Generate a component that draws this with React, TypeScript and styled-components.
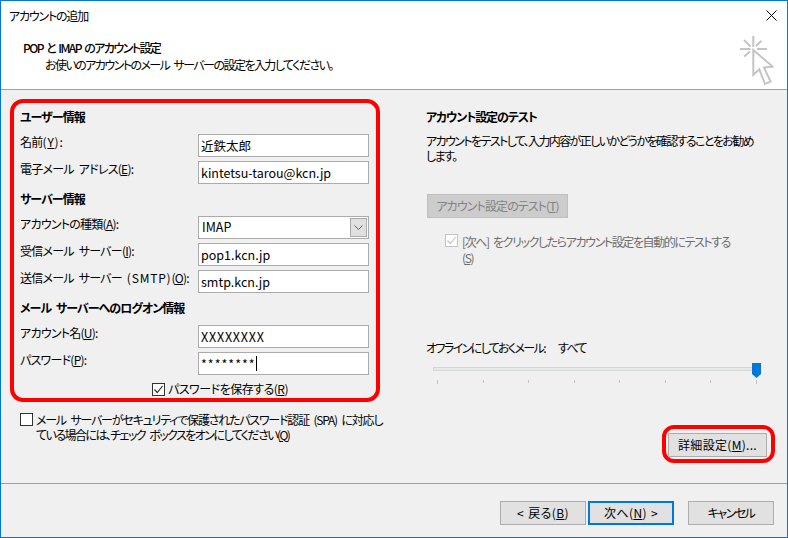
import React from 'react';
import styled, { createGlobalStyle } from 'styled-components';

const GlobalStyle = createGlobalStyle`
  html, body {
    margin: 0;
    padding: 0;
    background: #f0f0f0;
  }

  body {
    font-family: "Noto Sans CJK JP", "Noto Sans", sans-serif;
    font-size: 12px;
    font-feature-settings: "palt";
    color: #000;
  }

  * {
    box-sizing: border-box;
  }
`;

const Window = styled.div`
  width: 788px;
  height: 538px;
  border: 1px solid #0078d7;
  background: #f0f0f0;
  display: flex;
  flex-direction: column;
  overflow: hidden;
`;

const TitleBar = styled.div`
  height: 30px;
  background: #fff;
  display: flex;
  justify-content: space-between;
  align-items: center;
  padding: 0 10px 0 8px;
  line-height: 16px;
  letter-spacing: -1.2px;

  svg {
    margin-top: -2px;
  }
`;

const Header = styled.div`
  height: 59px;
  background: #fff;
  border-bottom: 1px solid #a0a0a0;
  display: flex;
  justify-content: space-between;
  padding: 8px 13px 0 22px;

  svg {
    margin-top: -3px;
  }
`;

const HeaderTitle = styled.div`
  font-weight: 500;
  line-height: 18px;
  letter-spacing: -1.55px;
  word-spacing: 2px;
`;

const HeaderText = styled.div`
  line-height: 16px;
  padding-left: 22px;
  letter-spacing: -1.55px;
  word-spacing: 3px;
`;

const Body = styled.div`
  height: 393px;
  display: flex;
`;

const LeftColumn = styled.div`
  width: 415px;
  padding: 9px 0 0 9px;
`;

const RedBox = styled.div`
  width: 370px;
  height: 303px;
  border: 4px solid #f00;
  border-radius: 13px;
  padding: 5px 7px 0 6px;
`;

const Section = styled.div`
  margin-bottom: 6px;
`;

const SectionTitle = styled.div`
  height: 18px;
  line-height: 18px;
  font-weight: 700;
  margin-bottom: 8px;
  letter-spacing: -0.95px;
  word-spacing: 3px;
`;

const FieldRow = styled.div`
  height: 23px;
  margin-bottom: 4px;
  display: flex;
  justify-content: space-between;
`;

const FieldLabel = styled.div`
  line-height: 16px;
  white-space: nowrap;
  letter-spacing: -0.75px;
  word-spacing: 3px;
`;

const Latin = styled.span`
  letter-spacing: 0.8px;
`;

const Input = styled.div`
  width: 171px;
  height: 23px;
  border: 1px solid #ababab;
  background: #fff;
  padding: 0 2px;
  line-height: 21px;
  font-size: 12.5px;
  display: flex;
  align-items: center;
  justify-content: space-between;
  white-space: nowrap;
`;

const MaskedValue = styled.span<{ $spacing: number }>`
  letter-spacing: ${(p) => p.$spacing}px;
`;

const Caret = styled.span`
  display: inline-block;
  width: 1px;
  height: 15px;
  background: #000;
`;

const PasswordValue = styled.div`
  display: flex;
  align-items: center;
`;

const SelectValue = styled.span`
  padding: 0 0 2px 1px;
`;

const SelectArrow = styled.div`
  width: 17px;
  height: 19px;
  background: #e0e0e0;
  border: 1px solid #aaa;
  margin-right: -1px;
  display: flex;
  align-items: center;
  justify-content: center;
`;

const Box = styled.span<{ $disabled?: boolean }>`
  flex: none;
  width: 13px;
  height: 13px;
  background: #fff;
  border: 1px solid ${(p) => (p.$disabled ? '#c4c4c4' : '#333')};
  display: flex;
  align-items: center;
  justify-content: center;
`;

const SavePassword = styled.div`
  display: flex;
  align-items: center;
  gap: 3px;
  height: 16px;
  padding-left: 132px;
  line-height: 16px;
  letter-spacing: -0.5px;
`;

const SpaRow = styled.div`
  display: flex;
  gap: 3px;
  margin: 11px 0 0 10px;
  width: 372px;
  line-height: 15px;
  white-space: nowrap;
  word-spacing: 3px;
`;

const SpaText = styled.div`
  margin-top: -1px;
`;

const TextLine = styled.div<{ $spacing: number }>`
  letter-spacing: ${(p) => p.$spacing}px;
`;

const RightColumn = styled.div`
  width: 371px;
  padding: 19px 0 0 10px;
  display: flex;
  flex-direction: column;
`;

const TestTitle = styled.div`
  font-weight: 700;
  height: 16px;
  line-height: 16px;
  letter-spacing: -1.1px;
`;

const TestText = styled.div`
  margin-top: 8px;
  line-height: 15px;
  white-space: nowrap;
`;

const Button = styled.button<{ $width: number; $primary?: boolean; $spacing?: number }>`
  font: inherit;
  font-feature-settings: "palt";
  letter-spacing: ${(p) => p.$spacing ?? 0}px;
  word-spacing: 1px;
  color: #000;
  width: ${(p) => p.$width}px;
  height: 24px;
  padding: 0;
  background: #e1e1e1;
  border: ${(p) => (p.$primary ? '2px solid #0078d7' : '1px solid #adadad')};
  line-height: 16px;
  white-space: nowrap;
`;

const TestButton = styled(Button)`
  margin: 31px 0 0 1px;
  background: #ccc;
  border-color: #bfbfbf;
  color: #838383;
`;

const AutoTestRow = styled.div`
  display: flex;
  gap: 4px;
  margin: 16px 0 0 19px;
  color: #6d6d6d;
  line-height: 16px;
  white-space: nowrap;
  letter-spacing: -1.4px;
  word-spacing: 3px;
`;

const OfflineRow = styled.div`
  margin-top: 74px;
  display: flex;
  gap: 13px;
  height: 16px;
  line-height: 16px;
  letter-spacing: -1.6px;
`;

const Slider = styled.div`
  position: relative;
  width: 332px;
  height: 28px;
  margin: 7px 0 0 6px;
`;

const SliderTrack = styled.div`
  position: absolute;
  left: 1px;
  right: 9px;
  top: 4px;
  height: 4px;
  background: #e7eaea;
  border: 1px solid #d6d6d6;
`;

const SliderTicks = styled.div`
  position: absolute;
  left: 5px;
  right: 7px;
  top: 17px;
  display: flex;
  justify-content: space-between;
`;

const Tick = styled.span<{ $end: boolean }>`
  width: 1px;
  height: ${(p) => (p.$end ? 4 : 3)}px;
  background: #c4c4c4;
`;

const SliderThumb = styled.svg`
  position: absolute;
  left: 320px;
  top: 0;
`;

const DetailRow = styled.div`
  display: flex;
  justify-content: flex-end;
  margin-top: 34px;
  width: 349px;
`;

const DetailHighlight = styled.div`
  width: 113px;
  height: 38px;
  border: 4px solid #f00;
  border-radius: 12px;
  padding: 4px 0 0 2px;
`;

const Footer = styled.div`
  flex: 1;
  border-top: 1px solid #a0a0a0;
  display: flex;
  justify-content: flex-end;
  padding: 17px 13px 0 0;
  gap: 2px;
`;

const CancelButton = styled(Button)`
  margin-left: 12px;
`;

const CloseIcon = () => (
  <svg width="11" height="11" viewBox="0 0 11 11">
    <path d="M0.5 0.5 L10.5 10.5 M10.5 0.5 L0.5 10.5" stroke="#000" strokeWidth="1" fill="none" />
  </svg>
);

const PointerIcon = () => (
  <svg width="34" height="50" viewBox="0 0 34 50" fill="none">
    <path
      d="M13.3 0 V11 M0 13 H10.5 M17 13 H27 M4 4 L10.6 10.6 M21.6 4.6 L16 10 M4 20.6 L10 15.6"
      stroke="#c4c4c4"
      strokeWidth="2"
    />
    <path
      d="M13.3 14 V39 L19.3 33.3 L25 48 L30.6 45.6 L24 31.6 L32.6 30.6 Z"
      fill="#fff"
      stroke="#c4c4c4"
      strokeWidth="2"
    />
  </svg>
);

const Check = ({ color }: { color: string }) => (
  <svg width="11" height="11" viewBox="0 0 11 11" fill="none">
    <path d="M1.5 5.5 L4.3 8.5 L9.5 2" stroke={color} strokeWidth="1.2" />
  </svg>
);

const Chevron = () => (
  <svg width="9" height="6" viewBox="0 0 9 6" fill="none">
    <path d="M0.5 0.5 L4.5 4.5 L8.5 0.5" stroke="#606060" strokeWidth="1" />
  </svg>
);

const Key = styled.span`
  text-decoration: underline;
  text-underline-offset: 1px;
`;

function Field({ label, children }: { label: React.ReactNode; children: React.ReactNode }) {
  return (
    <FieldRow>
      <FieldLabel>{label}</FieldLabel>
      <Input>{children}</Input>
    </FieldRow>
  );
}

export default function App() {
  const ticks = Array.from({ length: 8 });

  return (
    <>
      <GlobalStyle />
      <Window>
        <TitleBar>
          <span>アカウントの追加</span>
          <CloseIcon />
        </TitleBar>
        <Header>
          <div>
            <HeaderTitle>POP と IMAP のアカウント設定</HeaderTitle>
            <HeaderText>お使いのアカウントのメール サーバーの設定を入力してください。</HeaderText>
          </div>
          <PointerIcon />
        </Header>
        <Body>
          <LeftColumn>
            <RedBox>
              <Section>
                <SectionTitle>ユーザー情報</SectionTitle>
                <Field label={<>名前<Latin>(<Key>Y</Key>):</Latin></>}>近鉄太郎</Field>
                <Field label={<>電子メール アドレス(<Key>E</Key>):</>}>kintetsu-tarou@kcn.jp</Field>
              </Section>
              <Section>
                <SectionTitle>サーバー情報</SectionTitle>
                <Field label={<>アカウントの種類(<Key>A</Key>):</>}>
                  <SelectValue>IMAP</SelectValue>
                  <SelectArrow>
                    <Chevron />
                  </SelectArrow>
                </Field>
                <Field label={<>受信メール サーバー(<Key>I</Key>):</>}>pop1.kcn.jp</Field>
                <Field label={<>送信メール サーバー <Latin>(SMTP)</Latin>(<Key>O</Key>):</>}>smtp.kcn.jp</Field>
              </Section>
              <Section>
                <SectionTitle>メール サーバーへのログオン情報</SectionTitle>
                <Field label={<>アカウント名(<Key>U</Key>):</>}>
                  <MaskedValue $spacing={0.8}>XXXXXXXX</MaskedValue>
                </Field>
                <Field label={<>パスワード(<Key>P</Key>):</>}>
                  <PasswordValue>
                    <MaskedValue $spacing={1}>********</MaskedValue>
                    <Caret />
                  </PasswordValue>
                </Field>
              </Section>
              <SavePassword>
                <Box>
                  <Check color="#333" />
                </Box>
                <span>パスワードを保存する(<Key>R</Key>)</span>
              </SavePassword>
            </RedBox>
            <SpaRow>
              <Box />
              <SpaText>
                <TextLine $spacing={-1.2}>
                  メール サーバーがセキュリティで保護されたパスワード認証 (SPA) に対応し
                </TextLine>
                <TextLine $spacing={-1.55}>
                  ている場合には、チェック ボックスをオンにしてください(<Key>Q</Key>)
                </TextLine>
              </SpaText>
            </SpaRow>
          </LeftColumn>
          <RightColumn>
            <TestTitle>アカウント設定のテスト</TestTitle>
            <TestText>
              <TextLine $spacing={-1.6}>
                アカウントをテストして、入力内容が正しいかどうかを確認することをお勧め
              </TextLine>
              <TextLine $spacing={-1.6}>します。</TextLine>
            </TestText>
            <TestButton $width={141} $spacing={-0.9} disabled>
              アカウント設定のテスト(<Key>T</Key>)
            </TestButton>
            <AutoTestRow>
              <Box $disabled>
                <Check color="#c4c4c4" />
              </Box>
              <div>
                <div>[次へ] をクリックしたらアカウント設定を自動的にテストする</div>
                <div>(<Key>S</Key>)</div>
              </div>
            </AutoTestRow>
            <OfflineRow>
              <span>オフラインにしておくメール:</span>
              <span>すべて</span>
            </OfflineRow>
            <Slider>
              <SliderTrack />
              <SliderTicks>
                {ticks.map((_, i) => (
                  <Tick key={i} $end={i === 0 || i === ticks.length - 1} />
                ))}
              </SliderTicks>
              <SliderThumb width="9" height="15" viewBox="0 0 9 15">
                <path d="M0 0 H9 V11 L4.5 15 L0 11 Z" fill="#0078d7" />
              </SliderThumb>
            </Slider>
            <DetailRow>
              <DetailHighlight>
                <Button $width={99} $spacing={0.3}>詳細設定(<Key>M</Key>)...</Button>
              </DetailHighlight>
            </DetailRow>
          </RightColumn>
        </Body>
        <Footer>
          <Button $width={86} $spacing={0.4}>&lt; 戻る(<Key>B</Key>)</Button>
          <Button $width={86} $primary $spacing={0.4}>次へ(<Key>N</Key>) &gt;</Button>
          <CancelButton $width={86} $spacing={-1.5}>キャンセル</CancelButton>
        </Footer>
      </Window>
    </>
  );
}
